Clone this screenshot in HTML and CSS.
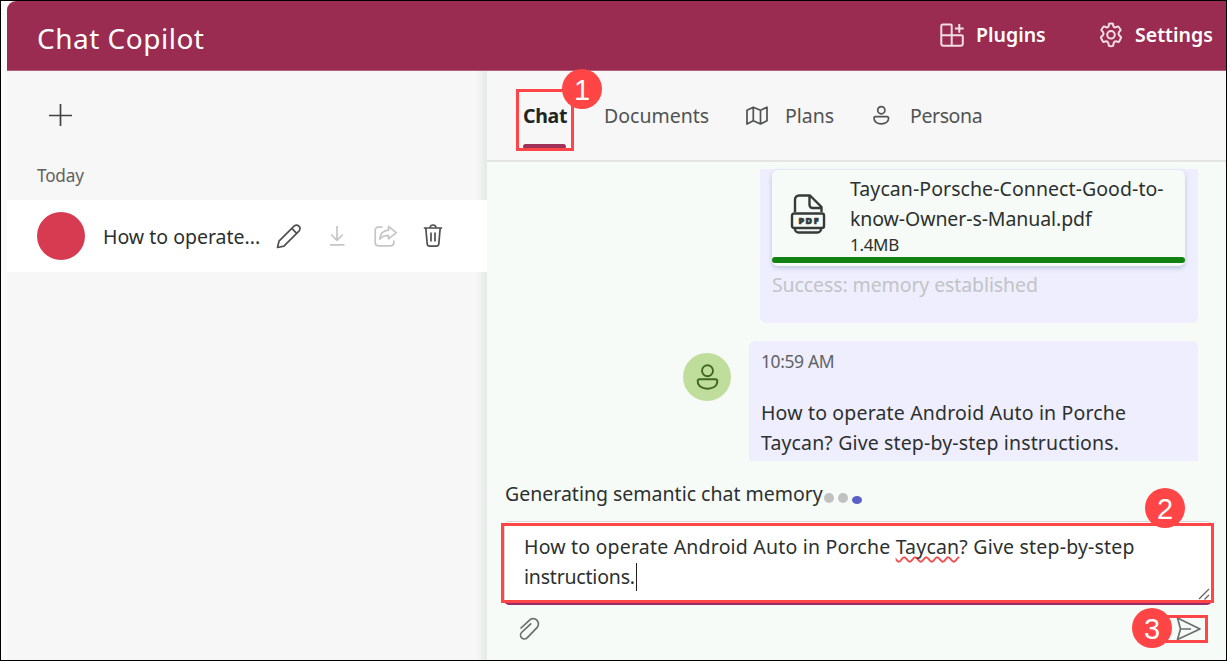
FILE: index.html
```
<!DOCTYPE html>
<html lang="en">
<head>
<meta charset="utf-8">
<title>Chat Copilot</title>
<link rel="stylesheet" href="styles.css">
</head>
<body>
<div class="window">
  <div class="app">
    <header class="header">
      <h1 class="brand">Chat Copilot</h1>
      <nav class="header-actions">
        <a class="header-link plugins">
          <svg class="icon-header" width="26" height="26" viewBox="0 0 26 26"><path d="M3.500 2.500h8.200a1 1 0 0 1 1 1v20.200H4.500a2.200 2.200 0 0 1-2.200-2.200V3.700a1.200 1.200 0 0 1 1.200-1.200zM2.300 13.200h20.200a1.300 1.300 0 0 1 1.300 1.300v7a2.200 2.200 0 0 1-2.200 2.200h-9M20.300 2v8.800M15.900 6.400h8.800"/></svg>
          <span class="plugins-text">Plugins</span>
        </a>
        <a class="header-link settings">
          <svg class="icon-header" width="26" height="26" viewBox="0 0 26 26"><path d="M10.600 4.300 11.100 1.800Q13 1.300 14.900 1.800L15.400 4.300Q16.100 5.700 17.700 5.300L20.200 4.400Q21.800 6 22.700 8.200L20.900 10.200Q19.900 11.700 21.100 13.200L23.100 15.200Q22.500 17.900 20.600 20.100L18 19.300Q16.200 19.300 15.700 21L15.100 23.900Q13 24.500 10.900 23.900L10.300 21Q9.800 19.300 8 19.300L5.400 20.100Q3.500 17.900 2.900 15.200L4.900 13.200Q6.100 11.700 5.100 10.200L3.300 8.200Q4.200 6 5.800 4.400L8.300 5.300Q9.900 5.700 10.600 4.300z"/><circle cx="13" cy="12.800" r="3.800"/></svg>
          <span class="settings-text">Settings</span>
        </a>
      </nav>
    </header>
    <div class="body">
      <aside class="sidebar">
        <div class="sidebar-top">
          <svg class="plus" width="24" height="24" viewBox="0 0 24 24"><path d="M12.500 1v22M1 12.500h23"/></svg>
        </div>
        <div class="group-label"><span>Today</span></div>
        <div class="chat-item">
          <span class="chat-avatar"></span>
          <span class="chat-name">How to operate...</span>
          <div class="chat-tools">
            <svg class="tool" width="26" height="26" viewBox="0 0 26 26"><path d="M1.500 24.500 3 18.200 18.300 2.900a3.500 3.500 0 0 1 4.900 4.900L7.900 23.100zM15.800 5.400l4.900 4.900"/></svg>
            <svg class="tool off" width="18" height="26" viewBox="0 0 18 26"><path d="M8 3v14M2.200 11.500 8 17.300l5.800-5.800M1 21.800h14.500"/></svg>
            <svg class="tool off" width="26" height="26" viewBox="0 0 26 26"><path d="M10.500 4.200H6.200a3 3 0 0 0-3 3v12.600a3 3 0 0 0 3 3h12.600a3 3 0 0 0 3-3v-2.300M16.500 3.500l7.800 6.200-7.800 6.200v-3.500c-4 0-6.500 1-8.700 3.700.3-5 3.500-8.600 8.700-9z"/></svg>
            <svg class="tool" width="20" height="26" viewBox="0 0 20 26"><path d="M.8 5h18.400M7 5a3 3 0 0 1 6 0M2.800 5l1.400 15.800a2.600 2.600 0 0 0 2.600 2.300h6.400a2.600 2.600 0 0 0 2.600-2.300L17.200 5M8 9.500v9M12 9.500v9"/></svg>
          </div>
        </div>
      </aside>
      <main class="main">
        <div class="tabs">
          <div class="tab chat"><span>Chat</span></div>
          <div class="tab documents"><span>Documents</span></div>
          <div class="tab plans">
            <svg class="tab-icon" width="24" height="22" viewBox="0 0 24 22"><path d="M2 5.200 8.300 2.200l7.200 3L22 2.200v13.500l-6.500 3.300-7.200-3.300L2 19zM8.300 2.200v13.500M15.500 5.200V19"/></svg>
            <span>Plans</span>
          </div>
          <div class="tab persona">
            <svg class="tab-icon" width="18" height="22" viewBox="0 0 18 22"><circle cx="9.300" cy="5.200" r="3.600"/><path d="M3.500 11.600h11.600a1.500 1.500 0 0 1 1.500 1.500c0 3.700-3.200 5.700-7.300 5.700S2 16.800 2 13.100a1.500 1.500 0 0 1 1.500-1.500z"/></svg>
            <span>Persona</span>
          </div>
        </div>
        <section class="messages">
          <article class="bubble upload">
            <div class="file-card">
              <div class="file-row">
                <svg class="pdf" width="36" height="42" viewBox="0 0 36 42"><path d="M5 19V6.500a4 4 0 0 1 4-4h11L31.500 14v5M19.500 2.500V12a3 3 0 0 0 3 3h8.500M4 20.500h28a2 2 0 0 1 2 2v10.500a2 2 0 0 1-2 2H4a2 2 0 0 1-2-2V22.500a2 2 0 0 1 2-2zM5 35.500v.5a3.500 3.500 0 0 0 3.500 3.500h19A3.500 3.500 0 0 0 31 36v-.5"/><text x="8.500" y="31" textLength="20">PDF</text></svg>
                <div class="file-info">
                  <div class="file-name"><span class="name-a">Taycan-Porsche-Connect-Good-to-</span><br><span class="name-b">know-Owner-s-Manual.pdf</span></div>
                  <div class="file-size"><span>1.4MB</span></div>
                </div>
              </div>
              <div class="progress"></div>
            </div>
            <div class="success"><span>Success: memory established</span></div>
          </article>
          <div class="message-row">
            <span class="user-avatar">
              <svg width="24" height="28" viewBox="0 0 24 28"><circle cx="12.500" cy="7.700" r="5.500"/><path d="M4.500 16.300h16a1.800 1.800 0 0 1 1.800 1.800c0 5-4.300 7.700-9.800 7.700s-9.800-2.700-9.800-7.700a1.800 1.800 0 0 1 1.800-1.800z"/></svg>
            </span>
            <article class="bubble question">
              <div class="time"><span>10:59 AM</span></div>
              <p class="question-text"><span class="q-a">How to operate Android Auto in Porche</span><br><span class="q-b">Taycan? Give step-by-step instructions.</span></p>
            </article>
          </div>
        </section>
        <div class="status"><span class="status-text">Generating semantic chat memory</span><i class="dot"></i><i class="dot"></i><i class="dot active"></i></div>
        <div class="composer">
          <div class="input">
            <div class="input-text"><span class="i-a">How to operate Android Auto in Porche <span class="typo">Taycan</span>? Give step-by-step</span><br><span class="i-b">instructions.</span><i class="caret"></i></div>
            <svg class="grip" width="12" height="12" viewBox="0 0 12 12"><path d="M1 11 11 1M6.500 11.500l4.500-4.500"/></svg>
          </div>
          <div class="composer-actions">
            <svg class="attach" width="24" height="26" viewBox="0 0 24 26"><path d="m2.500 12.500 8.800-8.200a5.200 5.200 0 0 1 7.700 7.300L9.100 21.800a3.800 3.800 0 0 1-5.500-5.300l9.700-9.200"/></svg>
            <svg class="send" width="26" height="26" viewBox="0 0 26 26"><path d="M1.500 2 24 13 1.500 23.500 4.500 13zM4.500 13H15"/></svg>
          </div>
        </div>
      </main>
    </div>
  </div>
  <div class="callout box-one"></div>
  <div class="callout box-two"></div>
  <div class="callout box-three"></div>
  <div class="badge badge-one">1</div>
  <div class="badge badge-two">2</div>
  <div class="badge badge-three">3</div>
</div>
</body>
</html>
```
FILE: styles.css
```
* { box-sizing: border-box; }
body { margin: 0; font-family: "Noto Sans", "Open Sans", sans-serif; font-size: 19.5px; line-height: 30px; color: #2c302e; }
svg { display: block; flex: none; fill: none; stroke: currentColor; stroke-width: 1.7; stroke-linejoin: round; }
span { white-space: nowrap; }
.window { position: relative; width: 1227px; height: 661px; border: 1px solid #000; padding-left: 6px; background: #fbfbfb; overflow: hidden; }
.app { height: 100%; display: flex; flex-direction: column; }
.header { height: 70px; flex: none; display: flex; justify-content: space-between; background: #9a2c51; color: #fff; border-radius: 9px 0 0 0; border-bottom: 1px solid #b0607c; }
.brand { margin: 0; padding: 18px 0 0 30px; font-size: 28px; line-height: 38px; font-weight: 400; letter-spacing: 0.5px; white-space: nowrap; }
.header-actions { display: flex; padding-top: 19px; }
.header-link { display: flex; gap: 11px; font-weight: 600; line-height: 30px; }
.icon-header { color: #f3dde5; margin-top: 2px; stroke-width: 2; }
.plugins { width: 159px; }
.settings { width: 128px; }
.body { flex: 1; display: flex; min-height: 0; }
.sidebar { width: 480px; flex: none; background: linear-gradient(90deg, #f7f7f7 469px, #e6e9e7 480px); }
.sidebar-top { height: 80px; padding: 32px 0 0 41px; }
.plus { color: #424242; }
.group-label { height: 49px; padding: 10px 0 0 30px; font-size: 17.2px; letter-spacing: -0.2px; color: #616161; }
.chat-item { height: 72px; background: #fff; display: flex; align-items: center; padding-left: 30px; }
.chat-avatar { width: 48px; height: 48px; border-radius: 50%; background: #d63b52; flex: none; }
.chat-name { width: 173px; margin-left: 18px; padding-top: 1px; }
.chat-tools { display: flex; color: #505050; }
.tool { margin-right: 25px; }
.tool:first-child { margin-right: 27px; }
.tool.off { color: #c4c7c5; }
.main { flex: 1; min-width: 0; display: flex; flex-direction: column; background: #f6fbf8; }
.tabs { height: 91px; flex: none; display: flex; padding-left: 36px; background: #f7f7f7; border-bottom: 2px solid #e2e5e1; color: #505352; }
.tab { height: 78px; padding-top: 30px; display: flex; }
.tab.chat { width: 81px; color: #202522; font-weight: 700; letter-spacing: -0.3px; position: relative; }
.tab.chat::after { content: ""; position: absolute; left: 0; bottom: 0; width: 43px; height: 5px; border-radius: 3px; background: #a0325a; }
.documents { width: 141px; }
.plans { width: 127px; }
.plans .tab-icon { margin: 4px 16px 0 0; }
.persona .tab-icon { margin: 4px 20px 0 0; }
.persona span { letter-spacing: -0.4px; }
.messages { height: 299px; flex: none; padding: 7px 28px 0 196px; overflow: hidden; display: flex; flex-direction: column; align-items: flex-end; }
.bubble { background: #efeeff; border-radius: 6px; }
.upload { width: 438px; height: 154px; flex: none; padding: 1px 13px 0 12px; border-radius: 0 0 6px 6px; }
.file-card { height: 96px; padding-top: 4px; background: #f6fbf8; border-radius: 6px; box-shadow: 0 2px 5px #b9c5d8; }
.file-row { display: flex; height: 83px; }
.pdf { margin: 19px 24px 0 18px; color: #363b38; stroke-width: 2.4; }
.pdf text { font: 900 9px "Noto Sans", sans-serif; fill: currentColor; stroke-width: .7; }
.file-name { height: 60px; }
.name-a { letter-spacing: 0.07px; }
.name-b { letter-spacing: -0.09px; }
.file-size { font-size: 17px; line-height: 21px; letter-spacing: -0.3px; }
.progress { height: 6px; border-radius: 3px; background: #128212; }
.success { color: #c1c4c5; padding-top: 4px; letter-spacing: -0.1px; }
.message-row { display: flex; align-items: flex-start; margin-top: 18px; }
.user-avatar { width: 48px; height: 48px; margin: 12px 18px 0 0; border-radius: 50%; background: #bfde9c; color: #3f6820; display: flex; align-items: center; justify-content: center; }
.user-avatar svg { stroke-width: 1.9; }
.question { width: 449px; height: 140px; padding: 5px 12px; }
.time { font-size: 17.5px; letter-spacing: -0.4px; color: #606363; }
.question-text { margin: 22px 0 0; }
.q-a { letter-spacing: 0.17px; }
.q-b { letter-spacing: 0.14px; }
.status { height: 60px; flex: none; padding: 18px 0 0 18px; display: flex; }
.dot { width: 10px; height: 10px; flex: none; margin: 14px 3px 0 1px; border-radius: 50%; background: #bfc2c0; }
.dot.active { height: 8px; margin-top: 17px; background: #5b5fc7; }
.composer { padding: 0 14px 0 17px; }
.input { height: 84px; display: flex; justify-content: space-between; align-items: flex-end; background: #fff; border: 1px solid #d5d8d6; border-bottom: 2px solid #9a2c66; border-radius: 5px; }
.input-text { align-self: flex-start; padding: 10px 0 0 19px; height: 71px; }
.i-a { letter-spacing: 0.2px; }
.i-b { letter-spacing: -0.2px; }
.typo { text-decoration: underline wavy #f05050 1.5px; text-underline-offset: 2px; text-decoration-skip-ink: none; }
.caret { display: inline-block; width: 1px; height: 28px; margin-left: 1px; background: #202020; vertical-align: -7px; }
.grip { margin: 0 1px 3px 0; color: #606060; stroke-width: 1.2; }
.composer-actions { display: flex; justify-content: space-between; padding: 11px 10px 0 14px; color: #6b6e6c; }
.callout { position: absolute; border: 3px solid #ff4545; }
.box-one { left: 515px; top: 88px; width: 58px; height: 62px; }
.box-two { left: 500px; top: 522px; width: 713px; height: 80px; }
.box-three { left: 1160px; top: 614px; width: 47px; height: 28px; }
.badge { position: absolute; width: 40px; height: 40px; border-radius: 50%; background: #ff4545; color: #fff; font: 29px/42px "Liberation Sans", Arial, sans-serif; text-align: center; }
.badge-one { left: 561px; top: 68px; }
.badge-two { left: 1144px; top: 487px; }
.badge-three { left: 1131px; top: 607px; }
```
